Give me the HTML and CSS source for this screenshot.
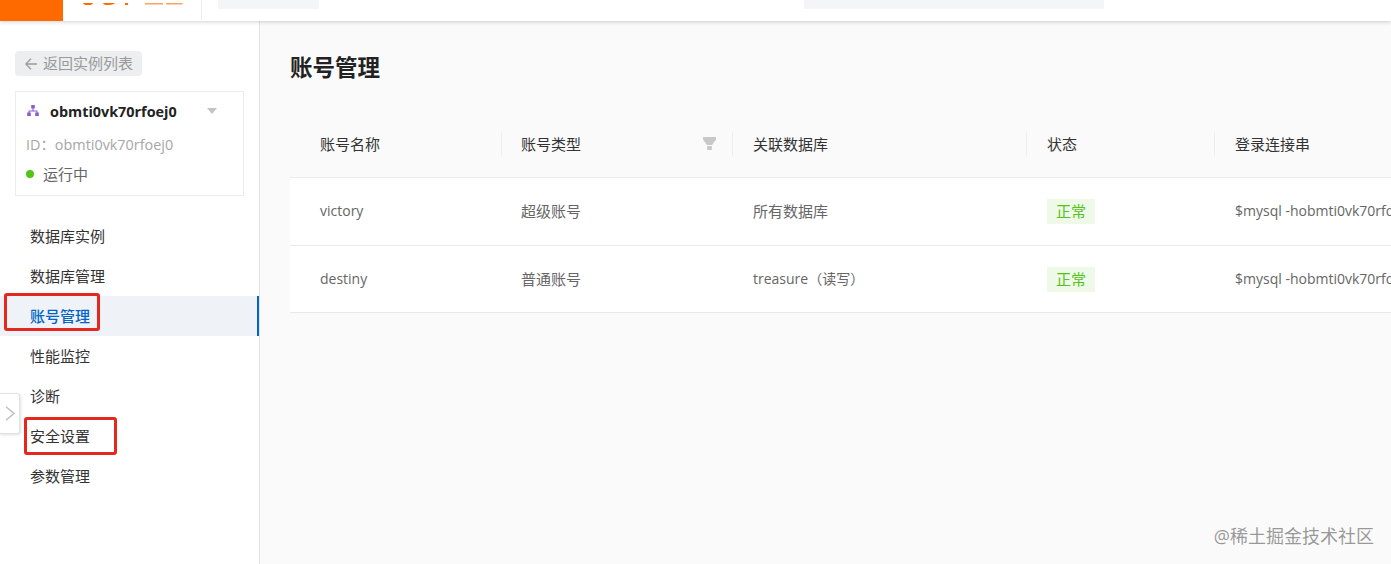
FILE: index.html
```html
<!DOCTYPE html>
<html lang="zh">
<head>
<meta charset="utf-8">
<title>账号管理</title>
<link rel="stylesheet" href="styles.css">
</head>
<body>
<header class="topbar">
  <div class="brand-block"></div>
  <div class="logo">
    <svg width="102" height="3" viewBox="0 0 102 3"><path class="logo-mark" d="M1 0h10l-1 1.500Q6 2.500 2 1.500zM21 0h12l-1 1Q27 2.800 22 1.500zM43 0h3v2h-3z"/><path class="logo-mark-soft" d="M63 0h18v1.500H63zM84 0h17l-1 1.500H84z"/></svg>
  </div>
  <div class="top-divider"></div>
  <div class="top-chip top-chip-a"></div>
  <div class="top-chip top-chip-b"></div>
</header>
<div class="layout">
  <aside class="sidebar">
    <div class="back-btn">
      <svg class="back-arrow" width="12" height="12" viewBox="0 0 12 12"><path d="M12 6H1M6 .8L.8 6 6 11.200" fill="none" stroke="#9a9a9a" stroke-width="1.300"/></svg>
      <span>返回实例列表</span>
    </div>
    <section class="instance">
      <div class="instance-head">
        <svg class="cluster-icon" width="12" height="12" viewBox="0 0 12 12"><path d="M4.200 0h3.600v3.400H6.500v2h4v2.200h1.300V11H8.200V7.600h1.300V6.400h-7v1.200h1.300V11H.2V7.600h1.300V5.400h4v-2H4.200z"/></svg>
        <span class="instance-name">obmti0vk70rfoej0</span>
        <span class="caret"></span>
      </div>
      <div class="instance-id">ID：obmti0vk70rfoej0</div>
      <div class="instance-status"><span class="dot"></span>运行中</div>
    </section>
    <nav class="menu">
      <div class="menu-item">数据库实例</div>
      <div class="menu-item">数据库管理</div>
      <div class="menu-item active">账号管理<span class="mark mark-a"></span></div>
      <div class="menu-item">性能监控</div>
      <div class="menu-item">诊断</div>
      <div class="menu-item">安全设置<span class="mark mark-b"></span></div>
      <div class="menu-item">参数管理</div>
    </nav>
    <button class="collapse" aria-label="展开">
      <svg width="10" height="15" viewBox="0 0 10 15"><path d="M1 .7l8 6.800-8 6.800" fill="none" stroke="#bdbdbd" stroke-width="1.400"/></svg>
    </button>
  </aside>
  <main class="content">
    <h1 class="title">账号管理</h1>
    <div class="table">
      <div class="row head">
        <div class="cell c1">账号名称</div>
        <div class="cell c2">账号类型
          <svg class="filter" width="13" height="13" viewBox="0 0 13 13"><path d="M0 0h13v2.500L9 8H4L0 2.500zM4.200 9h4.600v4H4.200z"/></svg>
        </div>
        <div class="cell c3">关联数据库</div>
        <div class="cell c4">状态</div>
        <div class="cell c5">登录连接串</div>
      </div>
      <div class="row">
        <div class="cell c1 latin">victory</div>
        <div class="cell c2">超级账号</div>
        <div class="cell c3">所有数据库</div>
        <div class="cell c4"><span class="tag">正常</span></div>
        <div class="cell c5 latin">$mysql -hobmti0vk70rfoej0.oceanbase.aliyuncs.com</div>
      </div>
      <div class="row">
        <div class="cell c1 latin">destiny</div>
        <div class="cell c2">普通账号</div>
        <div class="cell c3 latin">treasure（读写）</div>
        <div class="cell c4"><span class="tag">正常</span></div>
        <div class="cell c5 latin">$mysql -hobmti0vk70rfoej0.oceanbase.aliyuncs.com</div>
      </div>
    </div>
    <div class="watermark">@稀土掘金技术社区</div>
  </main>
</div>
</body>
</html>
```
FILE: styles.css
```css
* { box-sizing: border-box; }
html, body { margin: 0; height: 100%; overflow: hidden; }
body {
  width: 1391px;
  height: 564px;
  font-family: "Open Sans", "Noto Sans CJK SC", sans-serif;
  font-size: 15px;
  color: #333;
  background: #fafafa;
  position: relative;
}
.topbar {
  height: 21px;
  display: flex;
  align-items: flex-start;
  background: #fff;
  box-shadow: 0 1px 4px rgba(0,0,0,.18);
  position: relative;
  z-index: 2;
}
.brand-block { width: 63px; height: 21px; background: #ff6a00; }
.logo { width: 138px; padding-left: 19px; line-height: 0; }
.logo-mark { fill: #ff6a00; }
.logo-mark-soft { fill: #ffa35c; }
.top-divider { width: 1px; height: 20px; background: #eee; }
.top-chip { height: 9px; background: #f3f5f8; }
.top-chip-a { width: 101px; margin-left: 16px; }
.top-chip-b { width: 300px; margin-left: 485px; }
.layout { display: flex; height: 543px; }
.sidebar {
  width: 260px;
  flex: none;
  background: #fff;
  border-right: 1px solid #e3e3e3;
  padding-top: 30px;
  position: relative;
}
.back-btn {
  margin-left: 15px;
  width: 127px;
  height: 25px;
  background: #eceef0;
  border-radius: 4px;
  display: flex;
  align-items: center;
  padding: 0 0 2px 10px;
  color: #999;
  font-size: 15px;
  line-height: 22px;
}
.back-arrow { margin: 2px 6px 0 0; flex: none; }
.instance {
  margin: 15px 15px 0;
  width: 229px;
  height: 105px;
  border: 1px solid #ececec;
  padding: 0 10px;
}
.instance-head { display: flex; align-items: center; height: 38px; }
.cluster-icon { fill: #8a5cd0; margin-left: 1px; }
.instance-name { margin-left: 11px; font-weight: 700; font-size: 14.400px; color: #222; width: 157px; }
.caret {
  width: 0; height: 0;
  border-left: 5.500px solid transparent;
  border-right: 5.500px solid transparent;
  border-top: 6px solid #c4c4c4;
}
.instance-id { font-size: 14.400px; color: #a6a6a6; height: 26px; line-height: 26px; margin-top: 2px; }
.instance-status { display: flex; align-items: center; height: 30px; color: #666; font-size: 15px; }
.dot { width: 8px; height: 8px; border-radius: 50%; background: #52c41a; margin: 2px 9px 0 0; }
.menu { margin-top: 20px; }
.menu-item {
  height: 40px;
  line-height: 40px;
  padding-left: 30px;
  color: #333;
  position: relative;
}
.menu-item.active {
  background: #eff3f8;
  color: #0064c8;
  font-weight: 500;
  border-right: 2px solid #0064c8;
  width: 259px;
}
.mark {
  position: absolute;
  border: 3px solid #e5281e;
  border-radius: 3px;
}
.mark-a { left: 4px; top: -3px; width: 96px; height: 38px; }
.mark-b { left: 24px; top: 1px; width: 93px; height: 38px; }
.collapse {
  position: absolute;
  left: -1px;
  top: 372px;
  width: 21px;
  height: 41px;
  padding: 0;
  background: #fff;
  border: 1px solid #e2e2e2;
  border-radius: 0 3px 3px 0;
  box-shadow: 1px 1px 3px rgba(0,0,0,.12);
  display: flex;
  align-items: center;
  justify-content: center;
}
.content { flex: 1; min-width: 0; padding: 31px 0 0 30px; position: relative; overflow: hidden; }
.title { margin: 0; font-size: 22.500px; line-height: 32px; font-weight: 700; color: #222; }
.table { margin-top: 28px; width: 1200px; }
.row { display: flex; align-items: center; height: 67.500px; background: #fff; border-bottom: 1px solid #e9e9e9; color: #666; }
.row.head { height: 66px; padding-bottom: 2px; background: #fafafa; border-bottom-color: #ececec; color: #333; }
.cell { padding-left: 21px; white-space: nowrap; position: relative; line-height: 24px; height: 24px; }
.latin { font-size: 14px; }
.c1 { width: 211px; padding-left: 30px; }
.c2 { width: 231px; padding-left: 20px; }
.c3 { width: 294px; }
.c4 { width: 188px; }
.c5 { width: 275px; }
.head .cell + .cell::before {
  content: "";
  position: absolute;
  left: 0;
  top: 0;
  height: 24px;
  width: 1px;
  background: #eeeeee;
}
.filter { position: absolute; left: 202px; top: 5px; fill: #c8c8c8; }
.tag {
  display: inline-block;
  width: 48px;
  height: 25px;
  line-height: 25px;
  text-align: center;
  background: #eef9e8;
  color: #52c41a;
}
.watermark {
  position: absolute;
  right: 17px;
  bottom: 16px;
  font-size: 18px;
  line-height: 24px;
  color: rgba(120,120,120,.75);
}
```
